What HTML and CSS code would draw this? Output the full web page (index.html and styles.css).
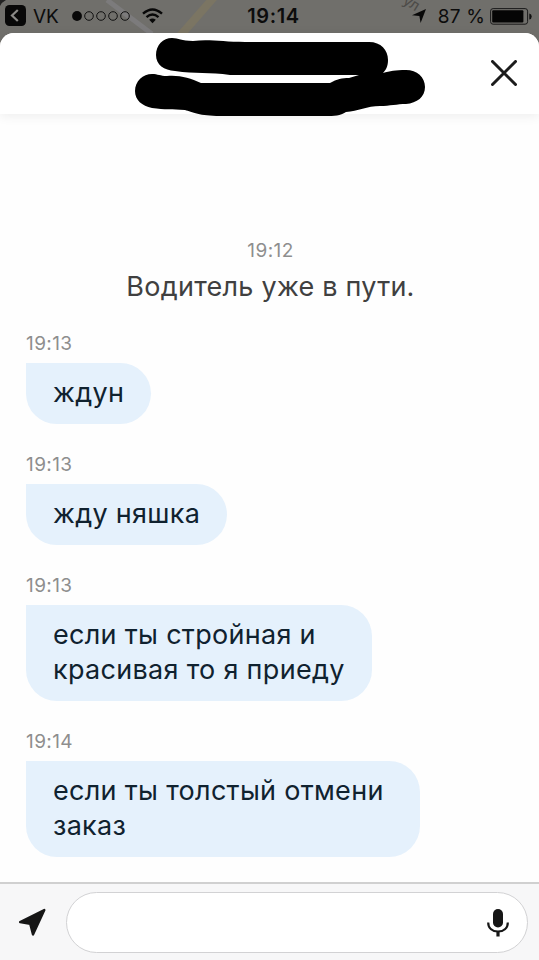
FILE: index.html
```html
<!DOCTYPE html>
<html lang="ru">
<head>
    <meta charset="UTF-8">
    <meta name="viewport" content="width=device-width, initial-scale=1.0">
    <title>Чат с водителем</title>
    <link rel="stylesheet" href="styles.css">
</head>
<body>
    <div class="status-bar">
        <!-- map behind the sheet -->
        <svg class="map" width="539" height="50" viewBox="0 0 539 50">
            <path d="M107 0 L152 34" stroke="#7c7b7c" stroke-width="5"/>
            <path d="M215 -4 L180 36" stroke="#7b7563" stroke-width="8"/>
            <path d="M0 0 H6 Q2 2 0 6 Z" fill="#222"/>
            <text x="402" y="3" transform="rotate(32 402 3)" font-size="15" fill="#4d4b48">ул</text>
        </svg>
        <div class="status-left">
            <svg width="22" height="22" viewBox="0 0 22 22">
                <rect x="0" y="0" width="21" height="21" rx="4.5" fill="#080808"/>
                <path d="M12.8 5 L7 10.5 L12.8 16" fill="none" stroke="#8a8986" stroke-width="2.2"/>
            </svg>
            <span class="carrier">VK</span>
            <svg class="signal" width="58" height="10" viewBox="0 0 58 10">
                <circle cx="5" cy="5" r="4.9" fill="#080808"/>
                <g fill="none" stroke="#111" stroke-width="1">
                    <circle cx="17" cy="5" r="4.3"/>
                    <circle cx="29" cy="5" r="4.3"/>
                    <circle cx="41" cy="5" r="4.3"/>
                    <circle cx="53" cy="5" r="4.3"/>
                </g>
            </svg>
            <svg class="wifi" width="21" height="16" viewBox="0 0 21 16">
                <g fill="none" stroke="#080808" stroke-width="2.4">
                    <path d="M1 5.6 Q10.5 -2.8 20 5.6"/>
                    <path d="M4.5 9.2 Q10.5 4 16.5 9.2"/>
                </g>
                <path d="M7.2 11.8 Q10.5 9.3 13.8 11.8 L10.5 15.2 Z" fill="#080808"/>
            </svg>
        </div>
        <div class="clock">19:14</div>
        <div class="status-right">
            <svg width="14" height="14" viewBox="0 0 14 14">
                <path d="M14 0 L8.6 14 L7.4 7 L0 6.2 Z" fill="#080808"/>
            </svg>
            <span class="percent">87 %</span>
            <svg width="42" height="17" viewBox="0 0 42 17">
                <rect x=".6" y=".6" width="37" height="15.6" rx="2.5" fill="none" stroke="#1a1a1a"/>
                <rect x="2.2" y="2.2" width="31.2" height="12.4" rx="1" fill="#050505"/>
                <path d="M39.3 5.5 Q41.7 6 41.7 8.5 Q41.7 11 39.3 11.5 Z" fill="#111"/>
            </svg>
        </div>
    </div>

    <div class="sheet">
        <div class="header">
            <svg class="driver" width="290" height="80" viewBox="0 0 290 80">
                <path d="M37 0 C44 0 46 3 58 3 C75 1 88 4 110 4 H234 C246 4 253 12 253 22 C253 28 251 32 248 35 C255 33 260 32 271 32 C282 32 290 39 290 49 C290 59 282 65 271 66 C262 66 255 68 245 68 C232 68 223 73 211 74 C205 78 200 78 190 78 H85 C65 78 57 74 50 72 C37 71 30 72 17 70 C7 68 0 62 0 53 C0 43 8 36 17 36 C23 36 25 38 32 38 C45 37 55 40 66 45 H195 C202 41 207 40 214 40 L224 37 H95 C75 34 60 36 40 33 C29 32 21 27 21 17 C21 7 28 0 37 0 Z" fill="#000"/>
            </svg>
            <button class="close">
                <svg width="26" height="26" viewBox="0 0 26 26">
                    <path d="M1.5 1.5 L24.5 24.5 M24.5 1.5 L1.5 24.5" stroke="#1c1c1c" stroke-width="3" stroke-linecap="round"/>
                </svg>
            </button>
        </div>

        <div class="messages">
            <div class="system">
                <div class="time">19:12</div>
                <div class="system-text">Водитель уже в пути.</div>
            </div>
            <div class="message">
                <div class="time">19:13</div>
                <div class="bubble">ждун</div>
            </div>
            <div class="message">
                <div class="time">19:13</div>
                <div class="bubble">жду няшка</div>
            </div>
            <div class="message">
                <div class="time">19:13</div>
                <div class="bubble">если ты стройная и<br>красивая то я приеду</div>
            </div>
            <div class="message">
                <div class="time">19:14</div>
                <div class="bubble wide">если ты толстый отмени<br>заказ</div>
            </div>
        </div>

        <div class="input-bar">
            <svg class="location" width="28" height="28" viewBox="0 0 28 28">
                <path d="M26.3 2 L15 26.5 L12.2 15.8 L2.2 14 Z" fill="#161616" stroke="#161616" stroke-width="2.4" stroke-linejoin="round"/>
            </svg>
            <div class="input">
                <svg width="22" height="28" viewBox="0 0 22 28">
                    <rect x="6" y="0" width="10" height="18.5" rx="5" fill="#161616"/>
                    <path d="M1.2 13.5 C1.2 19.5 5.5 22.5 11 22.5 C16.5 22.5 20.8 19.5 20.8 13.5" fill="none" stroke="#161616" stroke-width="2.2"/>
                    <path d="M11 22 V27.5" stroke="#161616" stroke-width="3.2"/>
                </svg>
            </div>
        </div>
    </div>
</body>
</html>
```
FILE: styles.css
```css
* {
    box-sizing: border-box;
}
body {
    margin: 0;
    height: 960px;
    display: flex;
    flex-direction: column;
    overflow: hidden;
    background: #706f6b;
    font-family: Inter, "Liberation Sans", sans-serif;
}
svg {
    display: block;
    flex-shrink: 0;
}
.status-bar {
    position: relative;
    height: 33px;
    flex-shrink: 0;
    display: grid;
    grid-template-columns: 1fr auto 1fr;
    align-items: center;
    padding: 0 7px 1px 5px;
    color: #0c0c0c;
    font-size: 19px;
}
.map {
    position: absolute;
    top: 0;
    left: 0;
}
.status-left, .status-right, .clock {
    position: relative;
}
.status-left, .status-right {
    display: flex;
    align-items: center;
}
.status-right {
    justify-content: flex-end;
}
.carrier {
    margin-left: 6px;
}
.signal {
    margin-left: 13px;
}
.wifi {
    margin-left: 12px;
}
.clock {
    padding-left: 10px;
    font-size: 20px;
    font-weight: 600;
    letter-spacing: 0.6px;
}
.percent {
    margin: 0 5px 0 12px;
    letter-spacing: 0.2px;
}
.sheet {
    position: relative;
    flex: 1;
    display: flex;
    flex-direction: column;
    background: #fefefe;
    border-radius: 14px 14px 0 0;
}
.header {
    position: relative;
    height: 81px;
    flex-shrink: 0;
    display: flex;
    justify-content: space-between;
    align-items: flex-start;
    padding: 5px 22px 0 135px;
    border-radius: 14px 14px 0 0;
    background: #fff;
    box-shadow: 0 2px 12px rgba(0, 0, 0, 0.07);
}
.close {
    margin-top: 22px;
    padding: 0;
    border: none;
    background: none;
}
.messages {
    flex: 1;
    padding: 125px 26px 0;
}
.time {
    height: 24px;
    line-height: 24px;
    font-size: 19px;
    letter-spacing: 0.4px;
    color: #8e8e8e;
}
.system {
    text-align: center;
    margin-bottom: 28px;
}
.system .time {
    padding-left: 2px;
}
.system-text {
    height: 34px;
    margin-top: 7px;
    padding-left: 2px;
    line-height: 34px;
    font-size: 27px;
    letter-spacing: 0.25px;
    color: #404040;
}
.message {
    margin-bottom: 29px;
}
.message:last-child {
    margin-bottom: 0;
}
.bubble {
    width: fit-content;
    margin-top: 6.5px;
    padding: 12.5px 27px 14px;
    border-radius: 0 31px 31px 31px;
    background: #e5f1fc;
    color: #10222f;
    font-size: 27px;
    letter-spacing: 0.3px;
    line-height: 35px;
}
.wide {
    padding-right: 36px;
}
.input-bar {
    height: 78px;
    flex-shrink: 0;
    display: flex;
    padding: 8px 11px 0 18px;
    border-top: 2px solid #d0d0d0;
    background: #f7f7f8;
}
.location {
    margin-top: 16px;
}
.input {
    flex: 1;
    height: 61px;
    margin-left: 20px;
    display: flex;
    align-items: center;
    justify-content: flex-end;
    padding-right: 18px;
    border: 1px solid #d2d2d4;
    border-radius: 31px;
    background: #fff;
}
```
